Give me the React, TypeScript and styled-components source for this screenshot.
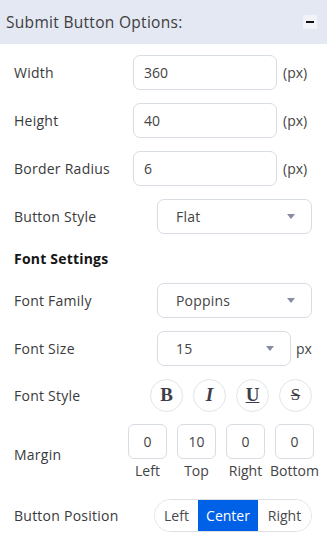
import React, { useState } from "react"
import styled, { createGlobalStyle } from "styled-components"

const GlobalStyle = createGlobalStyle`
  html, body {
    margin: 0;
    padding: 0;
    background: #ffffff;
  }
  body {
    font-family: "Open Sans", "Liberation Sans", sans-serif;
    color: #3a3a3a;
  }
  * {
    box-sizing: border-box;
  }
`

const Panel = styled.div`
  width: 327px;
  background: #ffffff;
`

const Header = styled.div`
  height: 44px;
  background: #e3e8f2;
  display: flex;
  align-items: center;
  justify-content: space-between;
  padding: 0 10px 0 6px;
`

const HeaderTitle = styled.span`
  font-size: 15.5px;
  color: #3d3d40;
  letter-spacing: 0.3px;
`

const CollapseButton = styled.button`
  width: 14px;
  height: 14px;
  padding: 0;
  border: none;
  background: #f1f3f8;
  display: flex;
  align-items: center;
  justify-content: center;
  cursor: pointer;

  &::before {
    content: "";
    width: 8px;
    height: 1.5px;
    background: #111;
  }
`

const Body = styled.div`
  display: flex;
  flex-direction: column;
  gap: 13px;
  padding: 11px 15px 20px 14px;
`

const Row = styled.div<{ $height?: number; $spaceBefore?: number }>`
  display: flex;
  align-items: center;
  justify-content: space-between;
  height: ${p => p.$height ?? 35}px;
  margin-top: ${p => p.$spaceBefore ?? 0}px;
`

const Label = styled.span`
  font-size: 14px;
  letter-spacing: 0.25px;
  color: #3a3a3c;
`

const SectionTitle = styled.div`
  height: 23px;
  display: flex;
  align-items: center;
  font-size: 14px;
  font-weight: 700;
  letter-spacing: 0.2px;
  color: #151515;
`

const Controls = styled.div<{ $gap?: number }>`
  display: flex;
  align-items: center;
  gap: ${p => p.$gap ?? 6}px;
`

const TextInput = styled.input`
  width: 144px;
  height: 35px;
  border: 1px solid #d8dce3;
  border-radius: 7px;
  padding: 0 10px;
  font-family: inherit;
  font-size: 14px;
  color: #444;
  outline: none;
  background: #fff;
`

const Unit = styled.span<{ $width?: number }>`
  min-width: ${p => p.$width ?? 0}px;
  font-size: 14px;
  color: #444;
`

const SelectBox = styled.div<{ $width: number }>`
  width: ${p => p.$width}px;
  height: 35px;
  border: 1px solid #d8dce3;
  border-radius: 7px;
  padding: 0 16px 0 18px;
  display: flex;
  align-items: center;
  justify-content: space-between;
  font-size: 14px;
  letter-spacing: 0.2px;
  color: #444;
  background: #fff;
`

const Caret = styled.span`
  width: 0;
  height: 0;
  border-left: 4.5px solid transparent;
  border-right: 4.5px solid transparent;
  border-top: 5px solid #878ba3;
`

const StyleButton = styled.button<{ $italic?: boolean; $underline?: boolean; $strike?: boolean }>`
  width: 33px;
  height: 33px;
  border-radius: 50%;
  border: 1px solid #e2e4e8;
  background: #fff;
  padding: 0;
  display: flex;
  align-items: center;
  justify-content: center;
  font-family: "Liberation Serif", "DejaVu Serif", serif;
  font-size: ${p => (p.$strike ? 17 : 19)}px;
  font-weight: ${p => (p.$strike ? 400 : 700)};
  color: #3c3f4a;
  font-style: ${p => (p.$italic ? "italic" : "normal")};
  text-decoration: ${p => (p.$underline ? "underline" : p.$strike ? "line-through" : "none")};
  text-decoration-thickness: 1px;
  cursor: pointer;
`

const MarginGrid = styled.div`
  display: grid;
  grid-template-columns: repeat(4, 39px);
  column-gap: 10px;
  row-gap: 2px;
  justify-items: center;
  margin-right: -2px;
  align-self: flex-start;
`

const MarginInput = styled.input`
  width: 39px;
  height: 35px;
  border: 1px solid #d8dce3;
  border-radius: 6px;
  text-align: center;
  font-family: inherit;
  font-size: 14px;
  color: #444;
  outline: none;
  padding: 0;
`

const MarginCaption = styled.span`
  font-size: 14px;
  color: #444;
  white-space: nowrap;
  line-height: 20px;
`

const Segmented = styled.div`
  display: flex;
  height: 33px;
  border: 1px solid #dcdfe4;
  border-radius: 17px;
  overflow: hidden;
`

const Segment = styled.button<{ $active?: boolean; $width: number }>`
  width: ${p => p.$width}px;
  border: none;
  padding: 0;
  font-family: inherit;
  font-size: 14px;
  background: ${p => (p.$active ? "#0061e6" : "#fff")};
  color: ${p => (p.$active ? "#ffffff" : "#4a4a4e")};
  cursor: pointer;
`

const Select = ({ value, width }: { value: string; width: number }) => (
  <SelectBox $width={width}>
    <span>{value}</span>
    <Caret />
  </SelectBox>
)

export default function App() {
  const [position, setPosition] = useState("Center")
  const margins = [
    { label: "Left", value: "0" },
    { label: "Top", value: "10" },
    { label: "Right", value: "0" },
    { label: "Bottom", value: "0" },
  ]

  return (
    <>
      <GlobalStyle />
      <Panel>
        <Header>
          <HeaderTitle>Submit Button Options:</HeaderTitle>
          <CollapseButton aria-label="collapse" />
        </Header>
        <Body>
          <Row>
            <Label>Width</Label>
            <Controls>
              <TextInput defaultValue="360" />
              <Unit $width={29}>(px)</Unit>
            </Controls>
          </Row>
          <Row>
            <Label>Height</Label>
            <Controls>
              <TextInput defaultValue="40" />
              <Unit $width={29}>(px)</Unit>
            </Controls>
          </Row>
          <Row>
            <Label>Border Radius</Label>
            <Controls>
              <TextInput defaultValue="6" />
              <Unit $width={29}>(px)</Unit>
            </Controls>
          </Row>
          <Row>
            <Label>Button Style</Label>
            <Select value="Flat" width={155} />
          </Row>

          <SectionTitle>Font Settings</SectionTitle>

          <Row>
            <Label>Font Family</Label>
            <Select value="Poppins" width={155} />
          </Row>
          <Row>
            <Label>Font Size</Label>
            <Controls $gap={5}>
              <Select value="15" width={134} />
              <Unit $width={16}>px</Unit>
            </Controls>
          </Row>
          <Row $height={32}>
            <Label>Font Style</Label>
            <Controls $gap={10}>
              <StyleButton>B</StyleButton>
              <StyleButton $italic>I</StyleButton>
              <StyleButton $underline>U</StyleButton>
              <StyleButton $strike>S</StyleButton>
            </Controls>
          </Row>
          <Row $height={60}>
            <Label>Margin</Label>
            <MarginGrid>
              {margins.map(m => (
                <MarginInput key={m.label} defaultValue={m.value} />
              ))}
              {margins.map(m => (
                <MarginCaption key={m.label}>{m.label}</MarginCaption>
              ))}
            </MarginGrid>
          </Row>
          <Row $height={33} $spaceBefore={2}>
            <Label>Button Position</Label>
            <Segmented>
              {[
                { name: "Left", width: 43 },
                { name: "Center", width: 60 },
                { name: "Right", width: 53 },
              ].map(s => (
                <Segment
                  key={s.name}
                  $width={s.width}
                  $active={position === s.name}
                  onClick={() => setPosition(s.name)}
                >
                  {s.name}
                </Segment>
              ))}
            </Segmented>
          </Row>
        </Body>
      </Panel>
    </>
  )
}
